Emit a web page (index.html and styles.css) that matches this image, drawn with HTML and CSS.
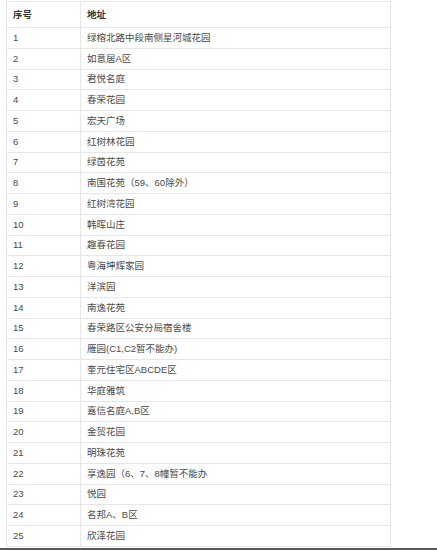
FILE: index.html
```html
<!DOCTYPE html>
<html lang="zh">
<head>
<meta charset="utf-8">
<link rel="stylesheet" href="styles.css">
</head>
<body>
<div class="page">
  <table class="addr-table">
    <thead>
      <tr><th class="col-no">序号</th><th>地址</th></tr>
    </thead>
    <tbody>
      <tr><td>1</td><td>绿榕北路中段南侧星河城花园</td></tr>
      <tr><td>2</td><td>如意居A区</td></tr>
      <tr><td>3</td><td>君悦名庭</td></tr>
      <tr><td>4</td><td>春荣花园</td></tr>
      <tr><td>5</td><td>宏天广场</td></tr>
      <tr><td>6</td><td>红树林花园</td></tr>
      <tr><td>7</td><td>绿茵花苑</td></tr>
      <tr><td>8</td><td>南国花苑（59、60除外）</td></tr>
      <tr><td>9</td><td>红树湾花园</td></tr>
      <tr><td>10</td><td>韩晖山庄</td></tr>
      <tr><td>11</td><td>趣春花园</td></tr>
      <tr><td>12</td><td>粤海坤辉家园</td></tr>
      <tr><td>13</td><td>洋滨园</td></tr>
      <tr><td>14</td><td>南逸花苑</td></tr>
      <tr><td>15</td><td>春荣路区公安分局宿舍楼</td></tr>
      <tr><td>16</td><td>雁园(C1,C2暂不能办)</td></tr>
      <tr><td>17</td><td>奎元住宅区ABCDE区</td></tr>
      <tr><td>18</td><td>华庭雅筑</td></tr>
      <tr><td>19</td><td>嘉信名庭A,B区</td></tr>
      <tr><td>20</td><td>金贸花园</td></tr>
      <tr><td>21</td><td>明珠花苑</td></tr>
      <tr><td>22</td><td>享逸园（6、7、8幢暂不能办</td></tr>
      <tr><td>23</td><td>悦园</td></tr>
      <tr><td>24</td><td>名邦A、B区</td></tr>
      <tr><td>25</td><td>欣泽花园</td></tr>
    </tbody>
  </table>
  <div class="bottom-bar"></div>
</div>
</body>
</html>
```
FILE: styles.css
```css
html, body {
  margin: 0;
  padding: 0;
  background: #fff;
}
.page {
  width: 437px;
  height: 550px;
  overflow: hidden;
  padding-top: 1px;
  box-sizing: border-box;
  display: flex;
  flex-direction: column;
}
.addr-table {
  margin-left: 6px;
  width: 385px;
  border-collapse: collapse;
  font-family: "Liberation Sans", "Noto Sans CJK SC", sans-serif;
  font-size: 9.5px;
  color: #4a4a4a;
  table-layout: fixed;
}
.addr-table th,
.addr-table td {
  border: 1px solid #e6e6e6;
  padding: 0 5px 0 6px;
  text-align: left;
  line-height: 12px;
  white-space: nowrap;
  overflow: hidden;
}
.addr-table th {
  height: 25px;
  font-weight: bold;
  color: #333;
}
.addr-table td {
  height: 19.76px;
}
.col-no {
  width: 62px;
}
.bottom-bar {
  margin-top: auto;
  height: 2px;
  background: #5a5a5a;
}
```
